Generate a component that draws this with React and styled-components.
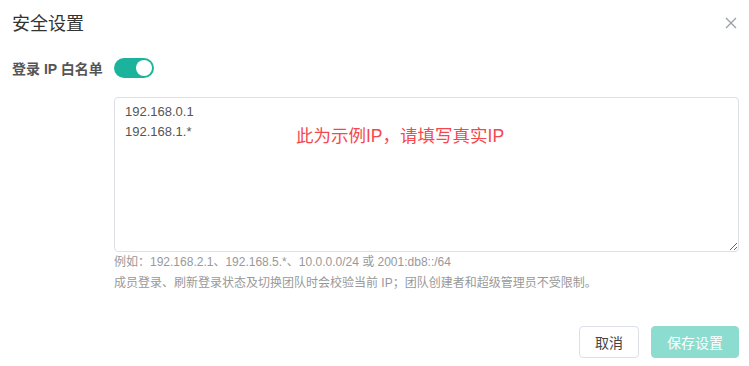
import React, { useState } from "react";
import styled, { createGlobalStyle } from "styled-components";

const GlobalStyle = createGlobalStyle`
  html, body {
    margin: 0;
    padding: 0;
    background: #fff;
  }
  body {
    font-family: "Liberation Sans", "Noto Sans CJK SC", sans-serif;
    color: #333;
  }
`;

const SecuritySettings = () => {
  const [enabled, setEnabled] = useState(true);
  const [ips, setIps] = useState("192.168.0.1\n192.168.1.*");

  return (
    <Dialog>
      <GlobalStyle />
      <Header>
        <Title>安全设置</Title>
        <CloseButton aria-label="关闭">
          <svg width="12" height="12" viewBox="0 0 12 12">
            <path d="M1 1L11 11M11 1L1 11" stroke="#9a9ea6" strokeWidth="1.3" />
          </svg>
        </CloseButton>
      </Header>

      <FieldRow>
        <Label>登录 IP 白名单</Label>
        <Switch $on={enabled} onClick={() => setEnabled(!enabled)}>
          <Knob $on={enabled} />
        </Switch>
      </FieldRow>

      <Body>
        <AreaWrap>
          <TextArea value={ips} onChange={(e) => setIps(e.target.value)} />
          <Watermark>此为示例IP，请填写真实IP</Watermark>
        </AreaWrap>
        <Help>
          <div>例如：192.168.2.1、192.168.5.*、10.0.0.0/24 或 2001:db8::/64</div>
          <div>成员登录、刷新登录状态及切换团队时会校验当前 IP；团队创建者和超级管理员不受限制。</div>
        </Help>
      </Body>

      <Footer>
        <Button $w={60}>取消</Button>
        <Button $w={88} $primary disabled>保存设置</Button>
      </Footer>
    </Dialog>
  );
};

const Dialog = styled.div`
  width: 749px;
  height: 366px;
  box-sizing: border-box;
  padding: 12px 10px 0 12px;
  display: flex;
  flex-direction: column;
`;

const Header = styled.div`
  display: flex;
  justify-content: space-between;
  align-items: center;
  height: 24px;
`;

const Title = styled.h2`
  margin: 0;
  font-size: 18px;
  line-height: 24px;
  font-weight: 400;
  color: #333;
`;

const CloseButton = styled.button`
  border: none;
  background: none;
  padding: 0;
  width: 12px;
  height: 12px;
  margin-right: 2px;
  margin-top: -2px;
  cursor: pointer;
  display: flex;
`;

const FieldRow = styled.div`
  display: flex;
  align-items: center;
  margin-top: 22px;
  height: 20px;
`;

const Label = styled.span`
  width: 102px;
  font-size: 14px;
  font-weight: 600;
  color: #555;
`;

const Switch = styled.div`
  width: 40px;
  height: 20px;
  border-radius: 10px;
  background: ${(p) => (p.$on ? "#1bb39c" : "#dcdfe6")};
  position: relative;
  cursor: pointer;
`;

const Knob = styled.span`
  position: absolute;
  top: 2px;
  left: ${(p) => (p.$on ? "22px" : "2px")};
  width: 16px;
  height: 16px;
  border-radius: 50%;
  background: #fff;
`;

const Body = styled.div`
  margin-left: 102px;
  margin-top: 19px;
`;

const AreaWrap = styled.div`
  position: relative;
  width: 625px;
  height: 155px;
`;

const TextArea = styled.textarea`
  width: 100%;
  height: 100%;
  box-sizing: border-box;
  border: 1px solid #dcdfe6;
  border-radius: 4px;
  padding: 4px 10px;
  font-family: "Liberation Sans", "Noto Sans CJK SC", sans-serif;
  font-size: 13px;
  line-height: 20px;
  color: #555;
  resize: vertical;
  outline: none;
`;

const Watermark = styled.span`
  position: absolute;
  left: 182px;
  top: 28px;
  font-size: 17.5px;
  line-height: 22px;
  color: #f5474d;
  pointer-events: none;
`;

const Help = styled.div`
  font-size: 12px;
  line-height: 21px;
  color: #999;
`;

const Footer = styled.div`
  display: flex;
  justify-content: flex-end;
  gap: 12px;
  margin-top: 32px;
`;

const Button = styled.button`
  width: ${(p) => p.$w}px;
  height: 32px;
  padding: 0;
  border-radius: 4px;
  font-family: "Liberation Sans", "Noto Sans CJK SC", sans-serif;
  font-size: 14px;
  border: 1px solid ${(p) => (p.$primary ? "#8cdcd0" : "#dcdfe6")};
  background: ${(p) => (p.$primary ? "#8cdcd0" : "#fff")};
  color: ${(p) => (p.$primary ? "#fff" : "#444")};
  cursor: ${(p) => (p.disabled ? "not-allowed" : "pointer")};
`;

export default SecuritySettings;
